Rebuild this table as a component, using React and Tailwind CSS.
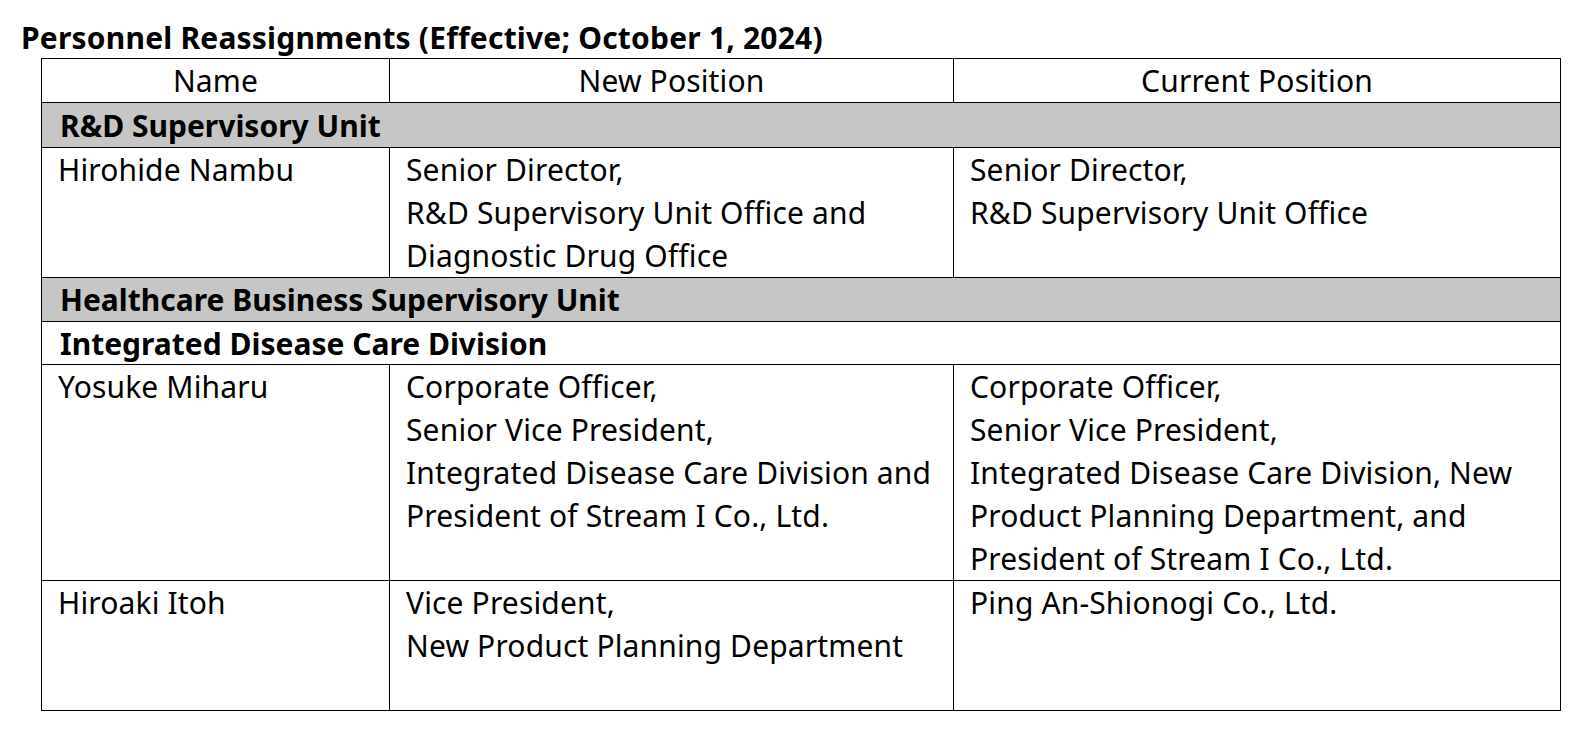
import React from "react";

const font = { fontFamily: '"Noto Sans", "Open Sans", sans-serif' };

function Lines({ lines }) {
  return lines.map((l, i) => (
    <div key={i} className="h-[43px] leading-[43px] whitespace-nowrap">{l}</div>
  ));
}

export default function App() {
  const cell = "border border-black align-top pl-[16px] pr-1 py-0";
  const group = "border border-black pl-[18px] pt-[1px] pb-0 font-bold tracking-[0px]";
  return (
    <div className="w-[1592px] h-[739px] bg-white text-black overflow-hidden" style={font}>
      <div className="pt-[20px] pl-[21px] text-[30px] font-bold leading-[36px] tracking-[0.2px] whitespace-nowrap">
        Personnel Reassignments (Effective; October 1, 2024)
      </div>
      <table className="ml-[41px] mt-[2px] border-collapse text-[30px] tracking-[0.15px] w-[1519px] table-fixed">
        <colgroup>
          <col className="w-[348px]" />
          <col className="w-[564px]" />
          <col className="w-[607px]" />
        </colgroup>
        <tbody>
          <tr>
            <td className="border border-black text-center leading-[43px] p-0">Name</td>
            <td className="border border-black text-center leading-[43px] p-0">New Position</td>
            <td className="border border-black text-center leading-[43px] p-0">Current Position</td>
          </tr>
          <tr className="bg-[#c6c6c6]">
            <td colSpan={3} className={`${group} leading-[43px]`}>R&amp;D Supervisory Unit</td>
          </tr>
          <tr>
            <td className={cell}><Lines lines={["Hirohide Nambu"]} /></td>
            <td className={cell}><Lines lines={["Senior Director,", "R&D Supervisory Unit Office and", "Diagnostic Drug Office"]} /></td>
            <td className={cell}><Lines lines={["Senior Director,", "R&D Supervisory Unit Office"]} /></td>
          </tr>
          <tr className="bg-[#c6c6c6]">
            <td colSpan={3} className={`${group} leading-[42px]`}>Healthcare Business Supervisory Unit</td>
          </tr>
          <tr>
            <td colSpan={3} className={`${group} leading-[41px]`}>Integrated Disease Care Division</td>
          </tr>
          <tr>
            <td className={cell}><Lines lines={["Yosuke Miharu"]} /></td>
            <td className={cell}><Lines lines={["Corporate Officer,", "Senior Vice President,", "Integrated Disease Care Division and", "President of Stream I Co., Ltd."]} /></td>
            <td className={cell}><Lines lines={["Corporate Officer,", "Senior Vice President,", "Integrated Disease Care Division, New", "Product Planning Department, and", "President of Stream I Co., Ltd."]} /></td>
          </tr>
          <tr>
            <td className={cell}><Lines lines={["Hiroaki Itoh"]} /><div className="h-[86px]" /></td>
            <td className={cell}><Lines lines={["Vice President,", "New Product Planning Department"]} /><div className="h-[43px]" /></td>
            <td className={cell}><Lines lines={["Ping An-Shionogi Co., Ltd."]} /><div className="h-[86px]" /></td>
          </tr>
        </tbody>
      </table>
    </div>
  );
}
